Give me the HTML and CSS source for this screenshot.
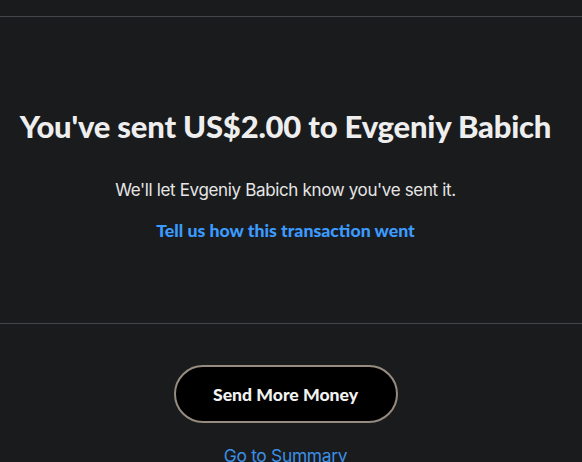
FILE: index.html
```html
<!DOCTYPE html>
<html lang="en">
<head>
<meta charset="utf-8">
<link rel="stylesheet" href="styles.css">
</head>
<body>
  <div class="topbar"></div>
  <main class="result">
    <h1 class="title">You've sent US$2.00 to Evgeniy Babich</h1>
    <p class="subtitle">We'll let Evgeniy Babich know you've sent it.</p>
    <a class="feedback" href="#">Tell us how this transaction went</a>
  </main>
  <section class="actions">
    <button class="btn-primary" type="button">Send More Money</button>
    <a class="summary-link" href="#">Go to Summary</a>
  </section>
</body>
</html>
```

FILE: styles.css
```css
html, body {
  margin: 0;
  padding: 0;
  background: #1a1b1d;
  color: #ececec;
  font-family: "Lato", "Liberation Sans", sans-serif;
  overflow: hidden;
  height: 462px;
}

.topbar {
  height: 16px;
  border-bottom: 1px solid #444548;
}

.result {
  height: 307px;
  display: flex;
  flex-direction: column;
  align-items: center;
  padding: 91px 11px 0 0;
  box-sizing: border-box;
  border-bottom: 1px solid #444548;
}

.title {
  margin: 0;
  font-family: "Lato", sans-serif;
  font-weight: 900;
  font-size: 31px;
  line-height: 36px;
  letter-spacing: -0.2px;
  color: #eeeeee;
  text-align: center;
  white-space: nowrap;
}

.subtitle {
  margin: 34px 0 0;
  font-family: "Inter", sans-serif;
  font-size: 17px;
  line-height: 24px;
  letter-spacing: -0.35px;
  color: #e6e6e6;
}

.feedback {
  margin-top: 18px;
  font-family: "Lato", sans-serif;
  font-weight: 900;
  font-size: 17.7px;
  line-height: 22px;
  color: #3b9bff;
  text-decoration: none;
}

.actions {
  display: flex;
  flex-direction: column;
  align-items: center;
  padding: 41px 11px 0 0;
}

.btn-primary {
  width: 224px;
  height: 58px;
  border-radius: 29px;
  border: 2px solid #958b7f;
  background: #000;
  color: #f2f2f2;
  font-family: "Lato", sans-serif;
  font-weight: 900;
  font-size: 17.6px;
  cursor: pointer;
}

.summary-link {
  margin-top: 21px;
  font-family: "Inter", sans-serif;
  font-size: 17.4px;
  line-height: 24px;
  letter-spacing: -0.3px;
  color: #3a8fe6;
  text-decoration: none;
}
```
